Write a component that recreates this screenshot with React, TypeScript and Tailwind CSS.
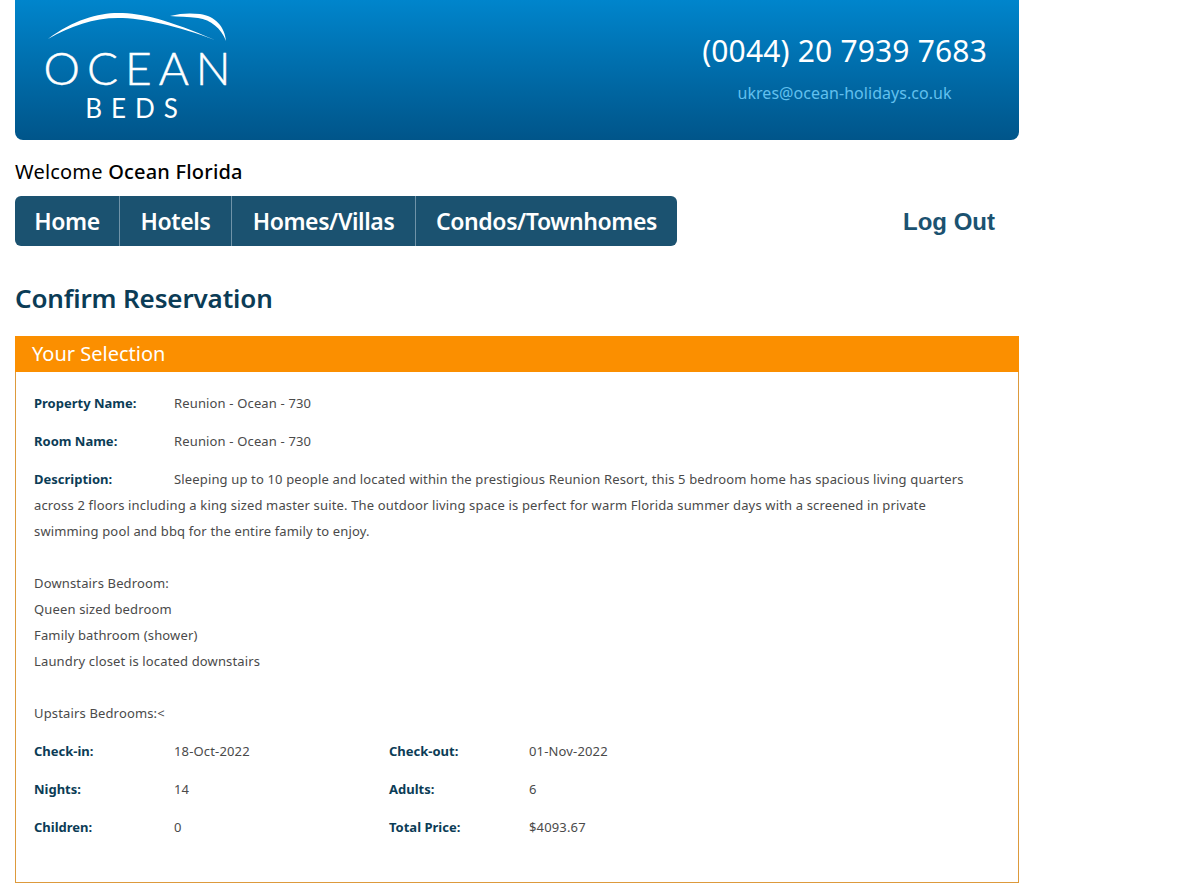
const bodyFont = "font-['Noto_Sans',sans-serif]";

function Logo() {
  return (
    <div className="flex w-[186px] flex-col items-center text-white">
      <svg width="186" height="32" viewBox="0 0 186 32">
        <path d="M5 27 C30 8 55 1 75 1 C100 1 125 8 172 28 C135 14 100 6 75 6 C50 6 28 14 5 27 Z" fill="#fff" />
        <path d="M127 4 C138 1 148 1 157 2 C172 4 182 15 183 29 C178 16 168 8 155 6 C145 4.5 135 5 127 4 Z" fill="#fff" />
      </svg>
      <div className="mt-[2px] ml-[9px] font-['Lato',sans-serif] text-[46px] leading-[44px] font-light tracking-[7px] whitespace-nowrap [-webkit-text-stroke:0.5px_white]">OCEAN</div>
      <div className="mt-[6px] font-['Lato',sans-serif] text-[26px] leading-[24px] tracking-[9px]">BEDS</div>
    </div>
  );
}

function NavItem({ label, className }: { label: string; className: string }) {
  return (
    <a className={`flex items-center justify-center text-white ${className}`} href="#">
      {label}
    </a>
  );
}

function Row({ label, value }: { label: string; value: string }) {
  return (
    <div className="flex h-[38px] items-center">
      <span className="w-[140px] font-bold tracking-normal text-[#0b3c56]">{label}</span>
      <span>{value}</span>
    </div>
  );
}

export default function App() {
  return (
    <div className={`min-h-[892px] w-[1196px] bg-white ${bodyFont}`}>
      <div className="ml-[15px] w-[1004px]">
        <header className="flex h-[140px] items-start justify-between rounded-b-lg bg-gradient-to-b from-[#0085cc] to-[#00558a] pt-[12px] pr-[32px] pl-[28px]">
          <Logo />
          <div className="mt-[20px] flex flex-col items-center">
            <div className="text-[30px] leading-[38px] tracking-[0.17px] text-white">(0044) 20 7939 7683</div>
            <div className="mt-[12px] text-[16px] leading-[22px] tracking-[0.04px] text-[#62c0ee]">ukres@ocean-holidays.co.uk</div>
          </div>
        </header>
        <div className="mt-[19px] text-[20px] leading-[26px] tracking-[0.2px] text-black">
          Welcome <span className="font-medium">Ocean Florida</span>
        </div>
        <div className="mt-[11px] flex items-center justify-between pr-[24px]">
          <nav className="flex h-[50px] rounded-md bg-[#1b5270] text-[23px] font-semibold tracking-[-0.4px]">
            <NavItem label="Home" className="w-[105px] border-r border-[#6f93a8]" />
            <NavItem label="Hotels" className="w-[112px] border-r border-[#6f93a8]" />
            <NavItem label="Homes/Villas" className="w-[184px] border-r border-[#6f93a8]" />
            <NavItem label="Condos/Townhomes" className="w-[261px]" />
          </nav>
          <a className="mt-[2px] font-['Liberation_Sans',sans-serif] text-[24px] font-bold text-[#1b5270]" href="#">Log Out</a>
        </div>
        <h1 className="mt-[35px] text-[26px] leading-[34px] font-semibold tracking-[-0.15px] text-[#0b3c56]">Confirm Reservation</h1>
        <section className="mt-[21px] h-[547px] border border-[#dd9a3c]">
          <h2 className="-mx-px -mt-px flex h-[36px] items-center bg-[#fb8f00] pl-[17px] text-[20px] text-white">Your Selection</h2>
          <div className="pt-[13px] pr-[30px] pl-[18px] text-[13px] tracking-[0.15px] text-[#4a4a4a]">
            <Row label="Property Name:" value="Reunion - Ocean - 730" />
            <Row label="Room Name:" value="Reunion - Ocean - 730" />
            <div className="leading-[26px]">
              <p className="pt-[5px]">
                <span className="inline-block w-[140px] font-bold tracking-normal text-[#0b3c56]">Description:</span>
                Sleeping up to 10 people and located within the prestigious Reunion Resort, this 5 bedroom home has spacious living quarters across 2 floors including a king sized master suite. The outdoor living space is perfect for warm Florida summer days with a screened in private swimming pool and bbq for the entire family to enjoy.
              </p>
              <p className="mt-[26px]">Downstairs Bedroom:</p>
              <p>Queen sized bedroom</p>
              <p>Family bathroom (shower)</p>
              <p>Laundry closet is located downstairs</p>
              <p className="mt-[26px]">Upstairs Bedrooms:&lt;</p>
            </div>
            <div className="mt-[7px] grid w-[710px] grid-cols-2">
              <Row label="Check-in:" value="18-Oct-2022" />
              <Row label="Check-out:" value="01-Nov-2022" />
              <Row label="Nights:" value="14" />
              <Row label="Adults:" value="6" />
              <Row label="Children:" value="0" />
              <Row label="Total Price:" value="$4093.67" />
            </div>
          </div>
        </section>
      </div>
    </div>
  );
}
